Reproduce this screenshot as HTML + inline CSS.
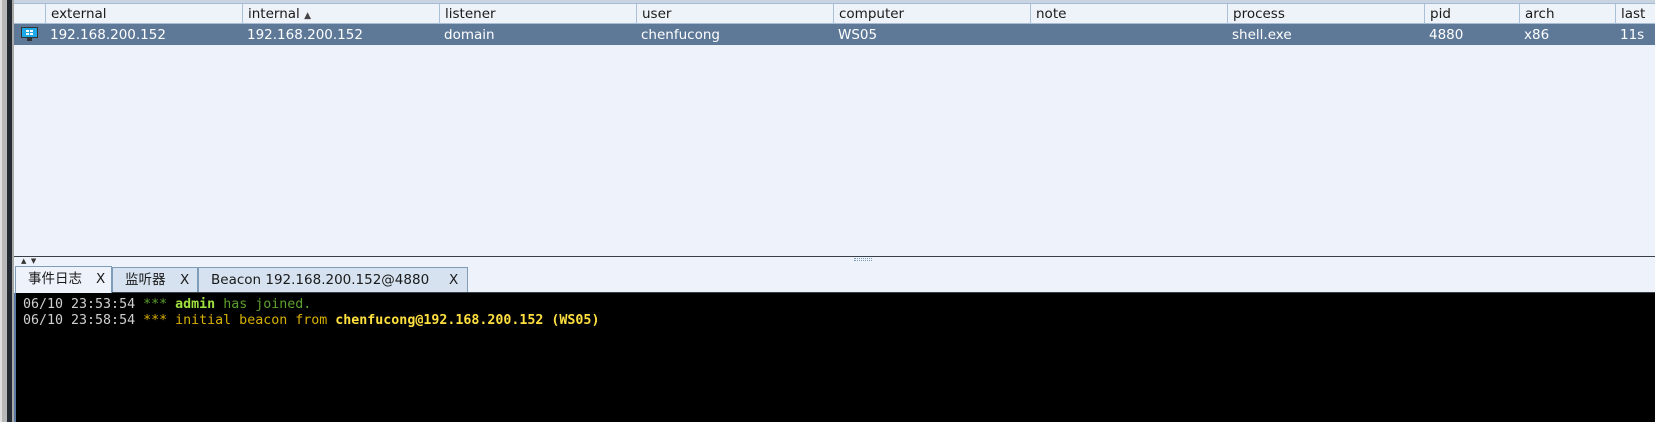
<!DOCTYPE html>
<html><head><meta charset="utf-8"><style>
*{margin:0;padding:0;box-sizing:border-box}
body{width:1655px;height:422px;overflow:hidden;background:#eef2fa;position:relative;font-family:"DejaVu Sans","Liberation Sans","Noto Sans CJK SC",sans-serif;font-size:13.5px;color:#1a1a1a}
.abs{position:absolute}
.hdr{top:3px;height:21px;left:14px;right:0;background:#eef2f9;border-top:1px solid #a8bcd4;border-bottom:1px solid #a8bcd4}
.col{position:absolute;top:0;height:20px;border-left:1px solid #a8c0d8;padding-left:5px;line-height:20px}
.row{top:24px;height:21px;left:14px;right:0;background:#5e7898;color:#fff}
.cell{position:absolute;top:1px;line-height:20px;padding-left:5px}
.mono{font-family:"DejaVu Sans Mono","Liberation Mono",monospace;font-size:13.3px;line-height:16px;white-space:pre}
.tab{position:absolute;top:267px;height:26px;border:1px solid #7f9db9;border-bottom:none;line-height:24px;padding-left:12px;background:#d6e2f0}
</style></head><body>
<div class="abs" style="left:0;top:0;width:2px;height:422px;background:#e0e0e0"></div>
<div class="abs" style="left:2px;top:0;width:5px;height:422px;background:#b8b8b8"></div>
<div class="abs" style="left:7px;top:0;width:5px;height:422px;background:#242a32"></div>
<div class="abs" style="left:12px;top:0;width:2px;height:422px;background:#a8a8a8"></div>
<div class="abs" style="left:14px;top:0;right:0;height:3px;background:#c8d4e2"></div>
<div class="abs hdr">
<div class="col" style="left:31px">external</div>
<div class="col" style="left:228px">internal <span style="font-size:9px;color:#444">▲</span></div>
<div class="col" style="left:425px">listener</div>
<div class="col" style="left:622px">user</div>
<div class="col" style="left:819px">computer</div>
<div class="col" style="left:1016px">note</div>
<div class="col" style="left:1213px">process</div>
<div class="col" style="left:1410px">pid</div>
<div class="col" style="left:1505px">arch</div>
<div class="col" style="left:1601px">last</div>
</div>
<div class="abs row">
<svg class="abs" style="left:6px;top:2px" width="19" height="16"><rect x="1" y="1" width="17" height="11" fill="#333"/><rect x="2" y="2" width="15" height="9" fill="#1fa8e8"/><rect x="6" y="4" width="3" height="2" fill="#fff"/><rect x="10" y="4" width="3" height="2" fill="#fff"/><rect x="6" y="7" width="3" height="2" fill="#fff"/><rect x="10" y="7" width="3" height="2" fill="#fff"/><rect x="7" y="12" width="5" height="3" fill="#333"/></svg>
<div class="cell" style="left:31px">192.168.200.152</div>
<div class="cell" style="left:228px">192.168.200.152</div>
<div class="cell" style="left:425px">domain</div>
<div class="cell" style="left:622px">chenfucong</div>
<div class="cell" style="left:819px">WS05</div>
<div class="cell" style="left:1213px">shell.exe</div>
<div class="cell" style="left:1410px">4880</div>
<div class="cell" style="left:1505px">x86</div>
<div class="cell" style="left:1601px">11s</div>
</div>
<div class="abs" style="left:14px;top:256px;right:0;height:1px;background:#3a4048"></div>
<div class="abs" style="left:21px;top:257px;font-size:7px;color:#333">▲&nbsp;&nbsp;▼</div>
<div class="abs" style="left:854px;top:258px;width:18px;height:3px;border-top:1px dotted #7f9db9;border-bottom:1px dotted #7f9db9"></div>
<div class="tab" style="left:15px;width:97px;background:#eef2fa;top:266px;height:27px">事件日志<span style="position:absolute;left:80px">X</span></div>
<div class="tab" style="left:112px;width:86px">监听器<span style="position:absolute;left:67px">X</span></div>
<div class="tab" style="left:198px;width:270px">Beacon 192.168.200.152@4880<span style="position:absolute;left:250px">X</span></div>
<div class="abs" style="left:112px;top:292px;right:0;height:1px;background:#3a4048"></div>
<div class="abs" style="left:14px;top:293px;width:2px;height:129px;background:#5a78a0"></div>
<div class="abs" style="left:16px;top:293px;right:0;bottom:0;background:#000"></div>
<div class="abs mono" style="left:23px;top:297px;color:#d0d0d0">06/10 23:53:54 <span style="color:#5ca02c">***</span> <b style="color:#9ee040">admin</b> <span style="color:#5ca02c">has joined.</span></div>
<div class="abs mono" style="left:23px;top:313px;color:#d0d0d0">06/10 23:58:54 <span style="color:#d8b000">***</span> <span style="color:#d8b000">initial beacon from</span> <b style="color:#ffe040">chenfucong@192.168.200.152 (WS05)</b></div>
</body></html>
